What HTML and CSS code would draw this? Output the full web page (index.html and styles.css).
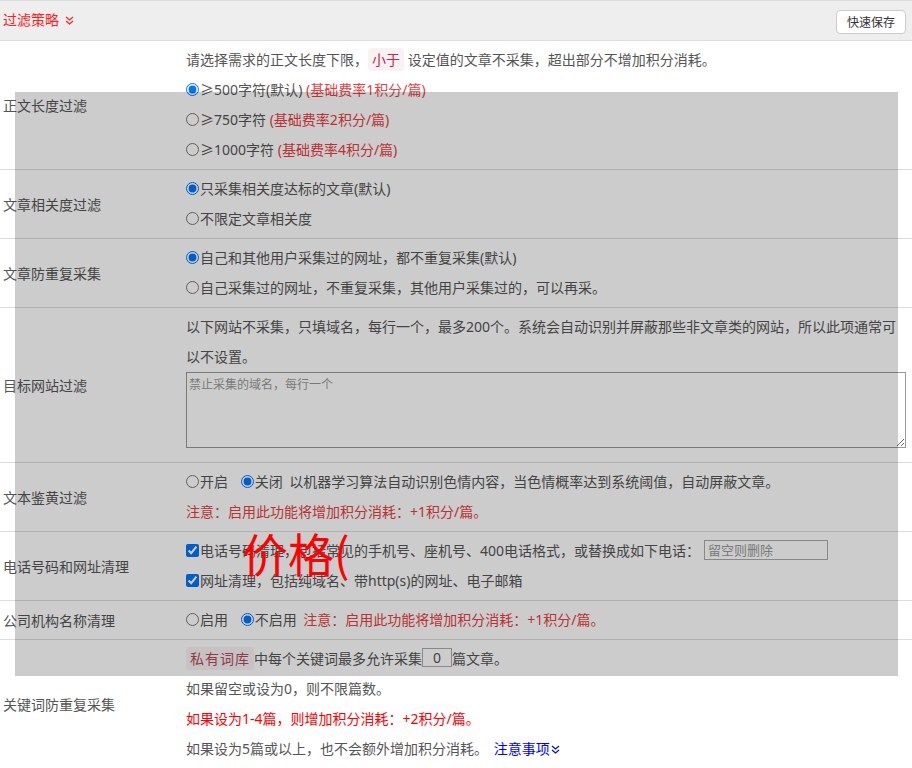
FILE: index.html
```html
<!DOCTYPE html>
<html lang="zh-CN">

<head>
    <meta charset="UTF-8">
    <meta name="viewport" content="width=device-width, initial-scale=1.0">
    <title>过滤策略</title>
    <link rel="stylesheet" href="styles.css">
</head>

<body>
    <div class="panel-head">
        <span class="panel-title">过滤策略
            <svg class="chev" width="9" height="9" viewBox="0 0 9 9"><path d="M1 1 L4.5 4 L8 1 M1 5 L4.5 8 L8 5" /></svg>
        </span>
        <button class="btn-save">快速保存</button>
    </div>

    <div class="settings">
        <div class="row">
            <div class="label">正文长度过滤</div>
            <div class="field">
                <div class="line">请选择需求的正文长度下限，<code class="tag">小于</code> 设定值的文章不采集，超出部分不增加积分消耗。</div>
                <div class="line"><label><input type="radio" name="len" checked>≥500字符(默认)</label> <span class="cost">(基础费率1积分/篇)</span></div>
                <div class="line"><label><input type="radio" name="len">≥750字符</label> <span class="cost">(基础费率2积分/篇)</span></div>
                <div class="line"><label><input type="radio" name="len">≥1000字符</label> <span class="cost">(基础费率4积分/篇)</span></div>
            </div>
        </div>

        <div class="row">
            <div class="label">文章相关度过滤</div>
            <div class="field">
                <div class="line"><label><input type="radio" name="rel" checked>只采集相关度达标的文章(默认)</label></div>
                <div class="line"><label><input type="radio" name="rel">不限定文章相关度</label></div>
            </div>
        </div>

        <div class="row">
            <div class="label">文章防重复采集</div>
            <div class="field">
                <div class="line"><label><input type="radio" name="dup" checked>自己和其他用户采集过的网址，都不重复采集(默认)</label></div>
                <div class="line"><label><input type="radio" name="dup">自己采集过的网址，不重复采集，其他用户采集过的，可以再采。</label></div>
            </div>
        </div>

        <div class="row">
            <div class="label">目标网站过滤</div>
            <div class="field">
                <div class="line">以下网站不采集，只填域名，每行一个，最多200个。系统会自动识别并屏蔽那些非文章类的网站，所以此项通常可以不设置。</div>
                <textarea class="domains" placeholder="禁止采集的域名，每行一个"></textarea>
            </div>
        </div>

        <div class="row">
            <div class="label">文本鉴黄过滤</div>
            <div class="field">
                <div class="line">
                    <label class="opt"><input type="radio" name="porn">开启</label>
                    <label class="opt"><input type="radio" name="porn" checked>关闭</label>
                    以机器学习算法自动识别色情内容，当色情概率达到系统阈值，自动屏蔽文章。
                </div>
                <div class="line cost">注意：启用此功能将增加积分消耗：+1积分/篇。</div>
            </div>
        </div>

        <div class="row">
            <div class="label">电话号码和网址清理</div>
            <div class="field">
                <div class="line"><label><input type="checkbox" checked>电话号码清理，包括常见的手机号、座机号、400电话格式，或替换成如下电话：</label><input class="phone" type="text" placeholder="留空则删除"></div>
                <div class="line"><label><input type="checkbox" checked>网址清理，包括纯域名、带http(s)的网址、电子邮箱</label></div>
            </div>
        </div>

        <div class="row">
            <div class="label">公司机构名称清理</div>
            <div class="field">
                <div class="line">
                    <label class="opt"><input type="radio" name="org">启用</label>
                    <label class="opt"><input type="radio" name="org" checked>不启用</label>
                    <span class="cost">注意：启用此功能将增加积分消耗：+1积分/篇。</span>
                </div>
            </div>
        </div>

        <div class="row">
            <div class="label">关键词防重复采集</div>
            <div class="field">
                <div class="line"><code class="tag wide">私有词库</code>中每个关键词最多允许采集<input class="count" type="text" value="0">篇文章。</div>
                <div class="line">如果留空或设为0，则不限篇数。</div>
                <div class="line warn">如果设为1-4篇，则增加积分消耗：+2积分/篇。</div>
                <div class="line">如果设为5篇或以上，也不会额外增加积分消耗。 <a class="more" href="#">注意事项<svg class="chev" width="9" height="9" viewBox="0 0 9 9"><path d="M1 1 L4.5 4 L8 1 M1 5 L4.5 8 L8 5" /></svg></a></div>
            </div>
        </div>
    </div>

    <!-- loading mask over the form -->
    <div class="mask"></div>
    <div class="mask-text">价格(</div>
</body>

</html>
```

FILE: styles.css
```css
body {
    margin: 0;
    font-family: "Noto Sans", "Noto Sans CJK SC", sans-serif;
    font-size: 14px;
    color: #555;
    background: #fff;
}

.panel-head {
    display: flex;
    align-items: center;
    justify-content: space-between;
    height: 39px;
    padding: 0 6px 0 3px;
    background: #eee;
    border-top: 1px solid #ddd;
    border-bottom: 1px solid #ddd;
}

.panel-title {
    color: #f22;
    font-size: 14px;
    line-height: 20px;
    margin-top: -1px;
}

.panel-title .chev {
    margin-left: 2px;
    vertical-align: 0;
}

.chev path {
    fill: none;
    stroke: currentColor;
    stroke-width: 1.2;
}

.btn-save {
    height: 24px;
    padding: 0 10px;
    margin-top: 2px;
    font-family: inherit;
    font-size: 12px;
    color: #333;
    background: #fff;
    border: 1px solid #ccc;
    border-radius: 4px;
}

.row {
    display: flex;
    border-bottom: 1px solid #ddd;
}

.label {
    width: 183px;
    padding-left: 3px;
    display: flex;
    align-items: center;
}

.field {
    flex: 1;
    padding: 4px 6px 4px 0;
}

.line {
    line-height: 30px;
}

.line label {
    white-space: nowrap;
}

.line input[type="radio"],
.line input[type="checkbox"] {
    width: 13px;
    height: 13px;
    margin: 0 1px 0 0;
    vertical-align: -1px;
}

.opt {
    margin-right: 9px;
}

.opt + .opt {
    margin-right: 3px;
}

.cost {
    color: #e8403f;
}

.warn {
    color: #f00;
}

.tag {
    font-family: inherit;
    font-size: 14px;
    color: #c7254e;
    background: #f9f2f4;
    padding: 2px 4px;
    border-radius: 4px;
}

.tag.wide {
    letter-spacing: 1px;
    color: #b24a5a;
}

.domains {
    display: block;
    box-sizing: border-box;
    width: 100%;
    height: 76px;
    margin: 0 0 10px;
    padding: 2px;
    font-family: inherit;
    font-size: 12px;
    border: 1px solid #999;
    resize: vertical;
}

.domains::placeholder,
.phone::placeholder {
    color: #999;
}

.phone {
    box-sizing: border-box;
    width: 124px;
    height: 20px;
    margin-left: 4px;
    padding: 0 3px;
    font-family: inherit;
    font-size: 13px;
    border: 1px solid #aaa;
    vertical-align: 1px;
}

.count {
    box-sizing: border-box;
    width: 30px;
    height: 19px;
    padding: 0;
    font-family: inherit;
    font-size: 14px;
    color: #555;
    text-align: center;
    border: 1px solid #aaa;
    vertical-align: 1px;
}

.more {
    margin-left: 2px;
    color: #00f;
    text-decoration: none;
}

.more .chev {
    margin-left: 1px;
    vertical-align: 0;
}

.mask {
    position: absolute;
    left: 15px;
    top: 92px;
    width: 883px;
    height: 584px;
    background: rgba(0, 0, 0, 0.2);
}

.mask-text {
    position: absolute;
    left: 242px;
    top: 529px;
    font-family: "Noto Sans CJK SC", sans-serif;
    font-size: 46px;
    line-height: 1;
    color: #f00;
}
```
